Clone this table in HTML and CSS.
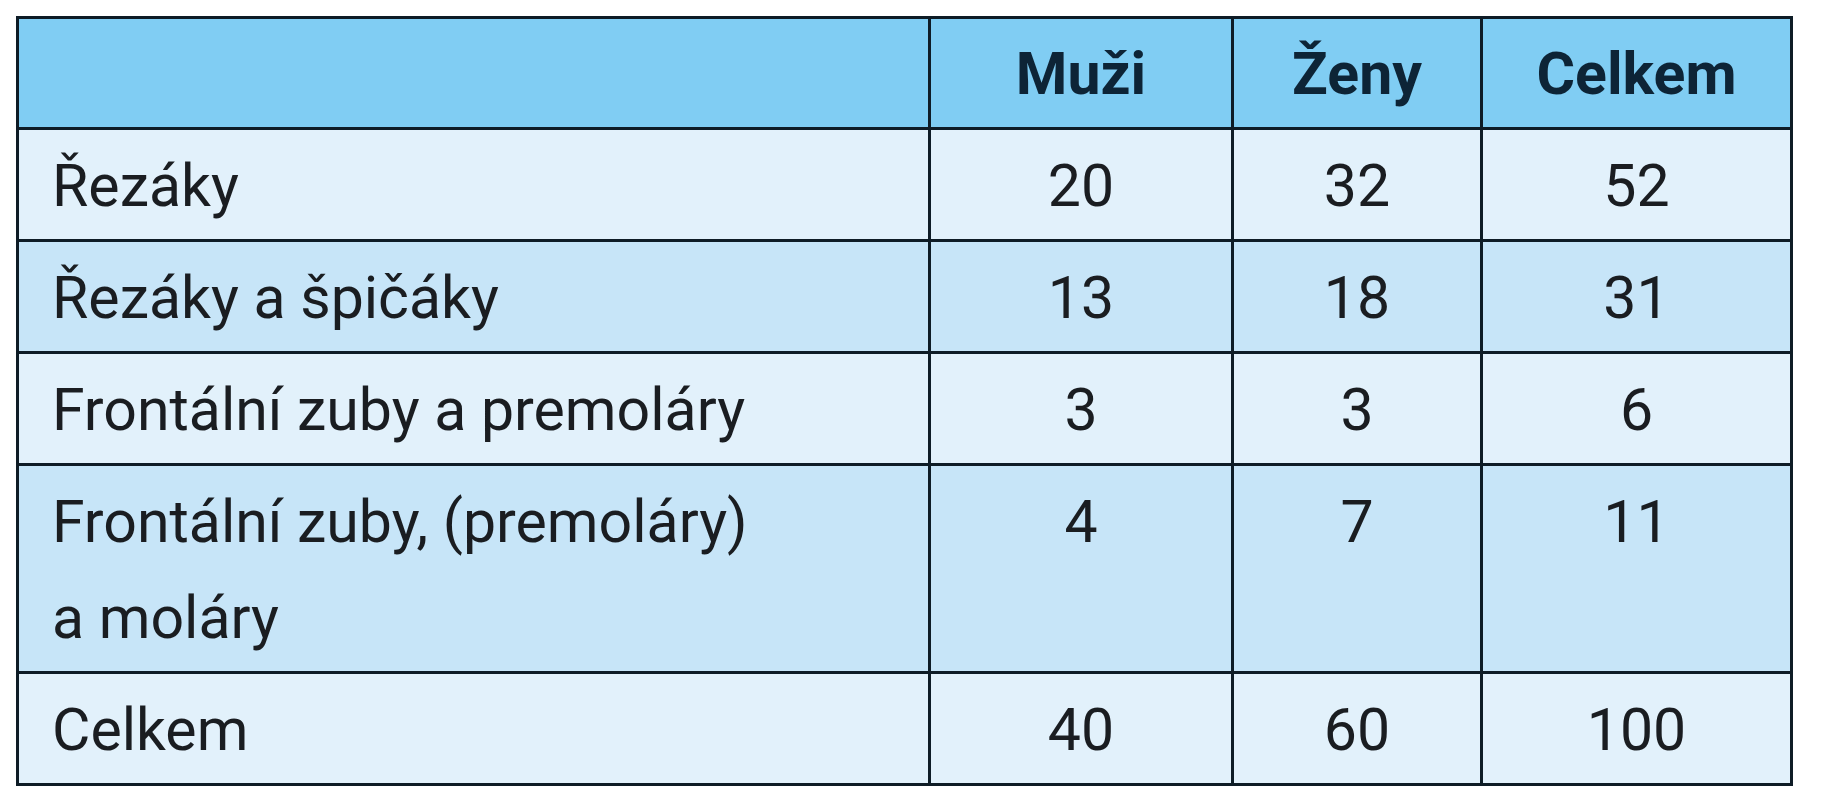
FILE: index.html
```html
<!DOCTYPE html>
<html lang="cs">
<head>
<meta charset="utf-8">
<title>Tabulka</title>
<link rel="stylesheet" href="styles.css">
</head>
<body>
<table class="data">
  <colgroup>
    <col class="c-label">
    <col class="c-men">
    <col class="c-women">
    <col class="c-total">
  </colgroup>
  <thead>
    <tr class="head">
      <th></th>
      <th>Muži</th>
      <th>Ženy</th>
      <th>Celkem</th>
    </tr>
  </thead>
  <tbody>
    <tr class="light">
      <td class="label">Řezáky</td>
      <td>20</td>
      <td>32</td>
      <td>52</td>
    </tr>
    <tr class="dark">
      <td class="label">Řezáky a špičáky</td>
      <td>13</td>
      <td>18</td>
      <td>31</td>
    </tr>
    <tr class="light">
      <td class="label">Frontální zuby a premoláry</td>
      <td>3</td>
      <td>3</td>
      <td>6</td>
    </tr>
    <tr class="dark">
      <td class="label">Frontální zuby, (premoláry)<br>a moláry</td>
      <td>4</td>
      <td>7</td>
      <td>11</td>
    </tr>
    <tr class="light">
      <td class="label">Celkem</td>
      <td>40</td>
      <td>60</td>
      <td>100</td>
    </tr>
  </tbody>
</table>
</body>
</html>
```
FILE: styles.css
```css
html, body {
  margin: 0;
  padding: 0;
  background: #ffffff;
}

body {
  padding: 16px 0 0 16px;
  font-family: Roboto, "Open Sans", sans-serif;
}

.data {
  border-collapse: collapse;
  table-layout: fixed;
  width: 1774px;
  border: 3px solid #0e1c26;
}

.c-label { width: 912px; }
.c-men { width: 303px; }
.c-women { width: 249px; }
.c-total { width: 310px; }

.data th,
.data td {
  border: 3px solid #0e1c26;
  font-size: 59px;
  line-height: 96px;
  padding: 8px 0 5px 0;
  text-align: center;
  vertical-align: top;
  white-space: nowrap;
}

.data th {
  font-weight: 700;
  color: #0d2436;
  padding: 7px 0 5px 0;
}

.data td {
  font-weight: 400;
  color: #1a1d21;
}

.data td.label {
  text-align: left;
  padding-left: 33px;
}

.head { background: #80cdf3; }
.light { background: #e2f1fb; }
.dark { background: #c7e5f8; }
```
